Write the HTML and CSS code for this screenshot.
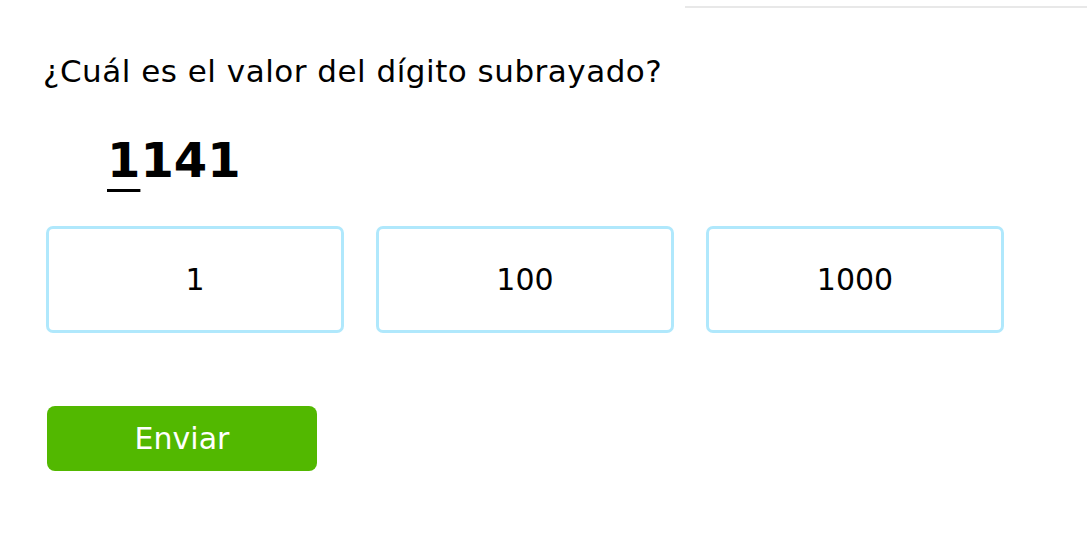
FILE: index.html
```html
<!DOCTYPE html>
<html>
<head>
    <title>Pregunta</title>
    <link rel="stylesheet" href="styles.css">
</head>
<body>
    <div class="top-line"></div>
    <div class="container">
        <p class="question">¿Cuál es el valor del dígito subrayado?</p>
        <div class="number"><span class="underlined">1</span>141</div>

        <div class="options">
            <div class="option">1</div>
            <div class="option">100</div>
            <div class="option">1000</div>
        </div>

        <button type="button" class="submit">Enviar</button>
    </div>
</body>
</html>
```

FILE: styles.css
```css
body {
    font-family: "DejaVu Sans", Verdana, sans-serif;
    background-color: #fff;
    color: #000;
    margin: 0;
    padding: 0;
}

.top-line {
    margin-left: 685px;
    margin-top: 6px;
    height: 2px;
    background-color: #e8e8e8;
}

.container {
    padding: 0 0 0 43px;
}

.question {
    font-size: 31px;
    letter-spacing: 0.5px;
    margin: 46px 0 0 0;
    line-height: 34px;
}

.number {
    font-size: 48px;
    font-weight: bold;
    margin: 44px 0 0 64px;
    line-height: 56px;
}

.underlined {
    text-decoration: underline;
    text-decoration-thickness: 3px;
    text-underline-offset: 12px;
}

.options {
    display: flex;
    gap: 32px;
    margin: 38px 0 0 3px;
}

.option {
    width: 292px;
    height: 101px;
    border: 3px solid #b0e8fc;
    border-radius: 7px;
    display: flex;
    align-items: center;
    justify-content: center;
    font-size: 30px;
}

.submit {
    margin: 73px 0 0 4px;
    width: 270px;
    height: 65px;
    background-color: #52b800;
    color: #fff;
    border: none;
    border-radius: 8px;
    font-family: "DejaVu Sans", Verdana, sans-serif;
    font-size: 30px;
    cursor: pointer;
}
```
